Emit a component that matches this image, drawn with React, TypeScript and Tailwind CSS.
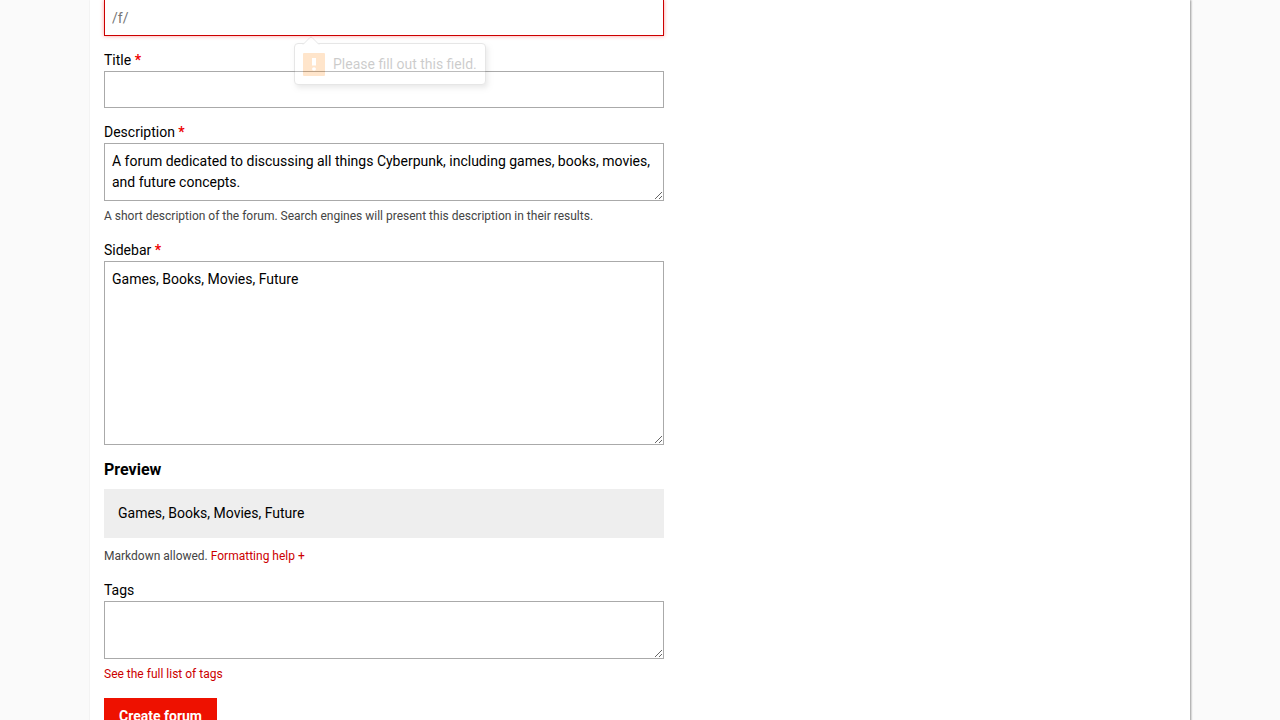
import { useState } from "react";
import type { ReactNode } from "react";

const control =
  "block w-full border border-[#aaa] bg-white px-[7px] py-[7px] text-sm leading-[21px] text-black outline-none placeholder:text-[#757575]";

function Label({ htmlFor, required, children }: { htmlFor: string; required?: boolean; children: ReactNode }) {
  return (
    <label htmlFor={htmlFor} className="block leading-[21px]">
      {children}
      {required && <b className="text-[#e00]"> *</b>}
    </label>
  );
}

function ValidationBubble() {
  return (
    <div
      role="alert"
      className="absolute left-[190px] top-[43px] flex h-[42px] items-center gap-2 whitespace-nowrap rounded border border-[#888] bg-white px-2 opacity-20 shadow-[2px_3px_5px_rgba(0,0,0,0.4)]"
    >
      <svg className="absolute -top-[8px] left-[7px]" width="18" height="9" viewBox="0 0 18 9" aria-hidden="true">
        <path d="M1 8.500L8 1.500Q9 .5 10 1.500L17 8.500V9H1z" fill="#fff" />
        <path d="M1 8.500L8 1.500Q9 .5 10 1.500L17 8.500" fill="none" stroke="#888" />
      </svg>
      <svg width="22" height="23" viewBox="0 0 22 23" aria-hidden="true">
        <rect width="22" height="23" rx="1" fill="#ff8000" />
        <path d="M9 5h4v7.500H9zM9 16a2 1.800 0 1 1 4 0a2 1.800 0 1 1 -4 0" fill="#fff" />
      </svg>
      <span>Please fill out this field.</span>
    </div>
  );
}

export default function App() {
  const [description, setDescription] = useState(
    "A forum dedicated to discussing all things Cyberpunk, including games, books, movies, and future concepts.",
  );
  const [sidebar, setSidebar] = useState("Games, Books, Movies, Future");

  return (
    <div className="flex min-h-screen flex-col bg-[#fafafa] px-[90px] font-[Roboto,sans-serif] text-sm leading-[21px] text-black">
      <main className="grow bg-white px-[14px] pb-[14px] shadow-[1px_0_2px_rgba(0,0,0,0.4)]">
        <form className="relative flex max-w-[560px] flex-col gap-[14px]" onSubmit={(e) => e.preventDefault()}>
          <div>
            <input
              aria-label="Name"
              placeholder="/f/"
              className="block h-9 w-full border border-t-0 border-[#c00] bg-white px-[7px] leading-[21px] shadow-[0_0_4px_rgba(255,0,0,0.4)] outline-none placeholder:text-[#757575]"
            />
          </div>
          <div>
            <Label htmlFor="title" required>Title</Label>
            <input id="title" className={control} />
          </div>
          <div>
            <Label htmlFor="description" required>Description</Label>
            <textarea id="description" rows={2} value={description} onChange={(e) => setDescription(e.target.value)} className={control} />
            <p className="mt-[5px] text-xs leading-[20px] text-[#444]">
              A short description of the forum. Search engines will present this description in their results.
            </p>
          </div>
          <div>
            <Label htmlFor="sidebar" required>Sidebar</Label>
            <textarea id="sidebar" rows={8} value={sidebar} onChange={(e) => setSidebar(e.target.value)} className={control} />
            <h2 className="mt-[14px] text-base font-bold leading-[21px]">Preview</h2>
            <div className="mt-[9px] bg-[#eee] p-[14px]">{sidebar}</div>
            <p className="mt-2 text-xs leading-[20px] text-[#444]">
              Markdown allowed. <a href="#formatting" className="text-[#c00]">Formatting help +</a>
            </p>
          </div>
          <div>
            <Label htmlFor="tags">Tags</Label>
            <textarea id="tags" rows={2} className={control} />
            <p className="mt-[5px] text-xs leading-[20px]">
              <a href="#tags" className="text-[#c00]">See the full list of tags</a>
            </p>
          </div>
          <button type="submit" className="self-start bg-[#e10] px-[15px] py-2 font-bold leading-[21px] text-white">
            Create forum
          </button>
          <ValidationBubble />
        </form>
      </main>
    </div>
  );
}
